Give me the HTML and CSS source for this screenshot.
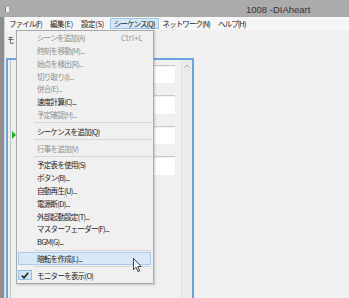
FILE: index.html
```html
<!DOCTYPE html>
<html lang="ja">
<head>
    <meta charset="UTF-8">
    <title>1008 -DIAheart</title>
    <link rel="stylesheet" href="styles.css">
</head>
<body>
    <div class="window">
        <!-- Заголовок окна -->
        <div class="title-bar">
            <span class="app-icon"></span>
            <span class="title">1008 -DIAheart</span>
        </div>

        <div class="frame">
            <div class="client">
                <!-- Строка меню -->
                <div class="menu-bar">
                    <span class="menu-bar-item">ファイル(F)</span>
                    <span class="menu-bar-item">編集(E)</span>
                    <span class="menu-bar-item">設定(S)</span>
                    <span class="menu-bar-item active">シーケンス(Q)</span>
                    <span class="menu-bar-item">ネットワーク(N)</span>
                    <span class="menu-bar-item">ヘルプ(H)</span>
                </div>

                <!-- Рабочая область -->
                <div class="workspace">
                    <div class="mode-label">モ</div>
                    <div class="panel">
                        <div class="list">
                            <div class="row"><span class="marker"></span><div class="cell"><div class="field"></div></div></div>
                            <div class="row"><span class="marker"></span><div class="cell"><div class="field"></div></div></div>
                            <div class="row"><span class="marker current"></span><div class="cell"><div class="field"></div></div></div>
                            <div class="row"><span class="marker"></span><div class="cell"><div class="field"></div></div></div>
                        </div>
                        <div class="scroll-col">
                            <svg class="scroll-arrow" width="6" height="4" viewBox="0 0 6 4">
                                <polyline points="0.5,3.5 3,1 5.5,3.5" fill="none" stroke="#a9a9a9" stroke-width="1"/>
                            </svg>
                        </div>
                    </div>
                </div>
            </div>
        </div>

        <!-- Выпадающее меню -->
        <div class="dropdown">
            <div class="menu-entry disabled"><span class="gutter"></span><span class="label">シーンを追加(A)</span><span class="shortcut">Ctrl+L</span></div>
            <div class="menu-entry disabled"><span class="gutter"></span><span class="label">時刻を移動(M)...</span></div>
            <div class="menu-entry disabled"><span class="gutter"></span><span class="label">始点を検出(R)...</span></div>
            <div class="menu-entry disabled"><span class="gutter"></span><span class="label">切り取り(I)...</span></div>
            <div class="menu-entry disabled"><span class="gutter"></span><span class="label">併合(E)...</span></div>
            <div class="menu-entry"><span class="gutter"></span><span class="label">速度計算(C)...</span></div>
            <div class="menu-entry disabled"><span class="gutter"></span><span class="label">予定確認(H)...</span></div>
            <div class="separator"></div>
            <div class="menu-entry"><span class="gutter"></span><span class="label">シーケンスを追加(Q)</span></div>
            <div class="separator"></div>
            <div class="menu-entry disabled"><span class="gutter"></span><span class="label">行事を追加(V)</span></div>
            <div class="separator"></div>
            <div class="menu-entry"><span class="gutter"></span><span class="label">予定表を使用(S)</span></div>
            <div class="menu-entry"><span class="gutter"></span><span class="label">ボタン(B)...</span></div>
            <div class="menu-entry"><span class="gutter"></span><span class="label">自動再生(U)...</span></div>
            <div class="menu-entry"><span class="gutter"></span><span class="label">電源断(D)...</span></div>
            <div class="menu-entry"><span class="gutter"></span><span class="label">外部起動設定(T)...</span></div>
            <div class="menu-entry"><span class="gutter"></span><span class="label">マスターフェーダー(F)...</span></div>
            <div class="menu-entry"><span class="gutter"></span><span class="label">BGM(G)...</span></div>
            <div class="separator"></div>
            <div class="menu-entry hover"><span class="gutter"></span><span class="label">暗転を作成(L)...</span></div>
            <div class="separator"></div>
            <div class="menu-entry">
                <span class="gutter">
                    <span class="check">
                        <svg width="8" height="7" viewBox="0 0 8 7">
                            <path d="M0.8,3.6 L3,5.8 L7.2,0.8" fill="none" stroke="#1a1a1a" stroke-width="1.5"/>
                        </svg>
                    </span>
                </span>
                <span class="label">モニターを表示(O)</span>
            </div>
        </div>

        <!-- Указатель мыши -->
        <svg class="cursor" width="9" height="14" viewBox="0 0 12 19">
            <path d="M0.5,0.5 L0.5,16 L4,12.5 L6.5,18.3 L8.8,17.3 L6.4,11.6 L11,11.6 Z" fill="#fff" stroke="#000" stroke-width="1"/>
        </svg>
    </div>
</body>
</html>
```

FILE: styles.css
```css
/* Базовые стили */
body {
    margin: 0;
    font-family: "Noto Sans CJK JP", "Noto Sans", sans-serif;
    font-size: 7.5px;
    color: #1b1b1b;
    background-color: #f0f0f0;
    overflow: hidden;
}

.window {
    position: relative;
    width: 349px;
    height: 298px;
    display: flex;
    flex-direction: column;
    overflow: hidden;
}

/* Заголовок */
.title-bar {
    height: 17px;
    flex-shrink: 0;
    background-color: #ababab;
    display: flex;
    align-items: center;
}

.app-icon {
    width: 3px;
    height: 5px;
    margin-left: 5px;
    margin-top: 1px;
    background-color: #f2f2f2;
    border-left: 1px solid #4f9c9c;
}

.title {
    margin-left: 237px;
    margin-top: 2px;
    font-family: "Liberation Sans", Arial, sans-serif;
    font-size: 9.5px;
    color: #383838;
    white-space: nowrap;
}

/* Рамка окна */
.frame {
    flex: 1;
    display: flex;
    min-height: 0;
    border-left: 4px solid #8e8e8e;
}

.client {
    flex: 1;
    display: flex;
    flex-direction: column;
    border-left: 1px solid #d2d2d2;
}

/* Строка меню */
.menu-bar {
    height: 13px;
    flex-shrink: 0;
    display: flex;
    align-items: center;
    background-color: #f6f6f6;
    white-space: nowrap;
}

.menu-bar-item {
    padding: 0 3px;
    line-height: 9px;
    letter-spacing: -0.9px;
    border: 1px solid transparent;
}

.menu-bar-item:nth-child(2),
.menu-bar-item:nth-child(3) {
    letter-spacing: -0.3px;
}

.menu-bar-item.active {
    margin-left: 2px;
    background-color: #d5e6f7;
    border-color: #9cc3ea;
}

/* Рабочая область */
.workspace {
    flex: 1;
    display: flex;
    flex-direction: column;
    padding-left: 1px;
}

.mode-label {
    height: 27.5px;
    line-height: 20px;
    padding-left: 1px;
    flex-shrink: 0;
}

.panel {
    flex: 1;
    width: 184px;
    display: flex;
    border: 2px solid #6aa4dc;
    border-bottom: none;
}

.list {
    flex: 1;
    margin-left: 2px;
    margin-right: 6px;
    padding-top: 5.5px;
    border-left: 1px solid #c4c4c4;
}

.row {
    display: flex;
    align-items: center;
    margin-bottom: 12.2px;
}

.marker {
    width: 6px;
    flex-shrink: 0;
}

.marker.current::before {
    content: '';
    display: block;
    width: 0;
    height: 0;
    margin-left: 0.7px;
    border-left: 4.5px solid #1fb31f;
    border-top: 4px solid transparent;
    border-bottom: 4px solid transparent;
}

.cell {
    flex: 1;
    padding-top: 0.7px;
    border-top: 1px solid #c9c9c9;
}

.field {
    height: 16.6px;
    background-color: #ffffff;
}

.scroll-col {
    width: 10px;
    flex-shrink: 0;
    background-color: #ebebeb;
    border-left: 1px solid #e2e2e2;
    display: flex;
    justify-content: center;
    align-items: flex-start;
}

.scroll-arrow {
    margin-top: 4px;
}

/* Выпадающее меню */
.dropdown {
    position: absolute;
    left: 16px;
    top: 30px;
    width: 138px;
    box-sizing: border-box;
    padding: 0.3px 1px 1px;
    background-color: #f0f0f0;
    border: 1px solid #a9a9a9;
    box-shadow: 1px 1px 2px rgba(0, 0, 0, 0.2);
    white-space: nowrap;
}

.menu-entry {
    height: 12.8px;
    display: flex;
    align-items: center;
    margin-right: 1px;
}

.menu-entry.disabled {
    color: #8e8e8e;
}

.menu-entry.hover {
    background-color: #d9e8f7;
    box-shadow: inset 0 0 0 1px #a9cbee;
}

.gutter {
    width: 16px;
    height: 100%;
    flex-shrink: 0;
    display: flex;
    align-items: center;
}

.label {
    margin-left: 3px;
    letter-spacing: -0.7px;
}

.shortcut {
    margin-left: auto;
    width: 30px;
    letter-spacing: 0.2px;
}

.separator {
    height: 4px;
    display: flex;
    align-items: center;
    padding-left: 16px;
}

.separator::after {
    content: '';
    flex: 1;
    height: 1px;
    background-color: #d6d6d6;
}

.check {
    width: 13.5px;
    height: 10.5px;
    margin-left: 0.3px;
    box-sizing: border-box;
    display: flex;
    align-items: center;
    justify-content: center;
    background-color: #cfe3f6;
    border: 1px solid #93bde8;
}

/* Курсор */
.cursor {
    position: absolute;
    left: 132.7px;
    top: 257.5px;
}
```
